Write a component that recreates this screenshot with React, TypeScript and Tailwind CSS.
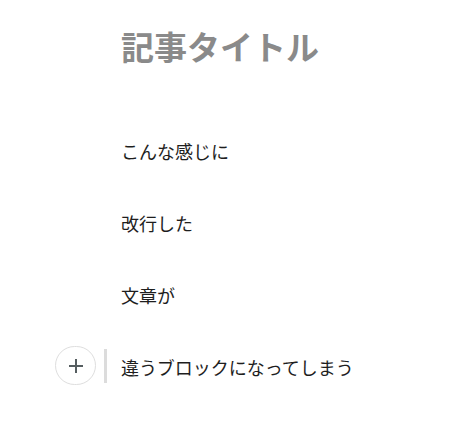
import React from "react";

export default function App() {
  const font = { fontFamily: '"Noto Sans CJK JP", "Noto Sans", sans-serif' };
  return (
    <div className="w-[456px] h-[427px] bg-white overflow-hidden" style={font}>
      <div className="pl-[121px] pt-[26px] flex flex-col">
        <h1 className="text-[33px] leading-[40px] font-bold text-[#8a8a8a]">記事タイトル</h1>
        <div className="mt-[69px] flex flex-col gap-[40px] text-[18px] leading-[32px] text-[#1e1e1e]">
          <p>こんな感じに</p>
          <p>改行した</p>
          <p>文章が</p>
          <div className="relative">
            <p>違うブロックになってしまう</p>
            <div className="absolute left-[-17px] top-[-2px] w-[3px] h-[34px] bg-[#dcdcdc]" />
            <button className="absolute left-[-66px] top-[-5px] p-0 w-[41px] h-[39px] rounded-full border border-[#dedede] bg-white flex items-center justify-center">
              <svg width="16" height="16" viewBox="0 0 16 16">
                <path d="M8 1v14M1 8h14" stroke="#555d60" strokeWidth="2" />
              </svg>
            </button>
          </div>
        </div>
      </div>
    </div>
  );
}
